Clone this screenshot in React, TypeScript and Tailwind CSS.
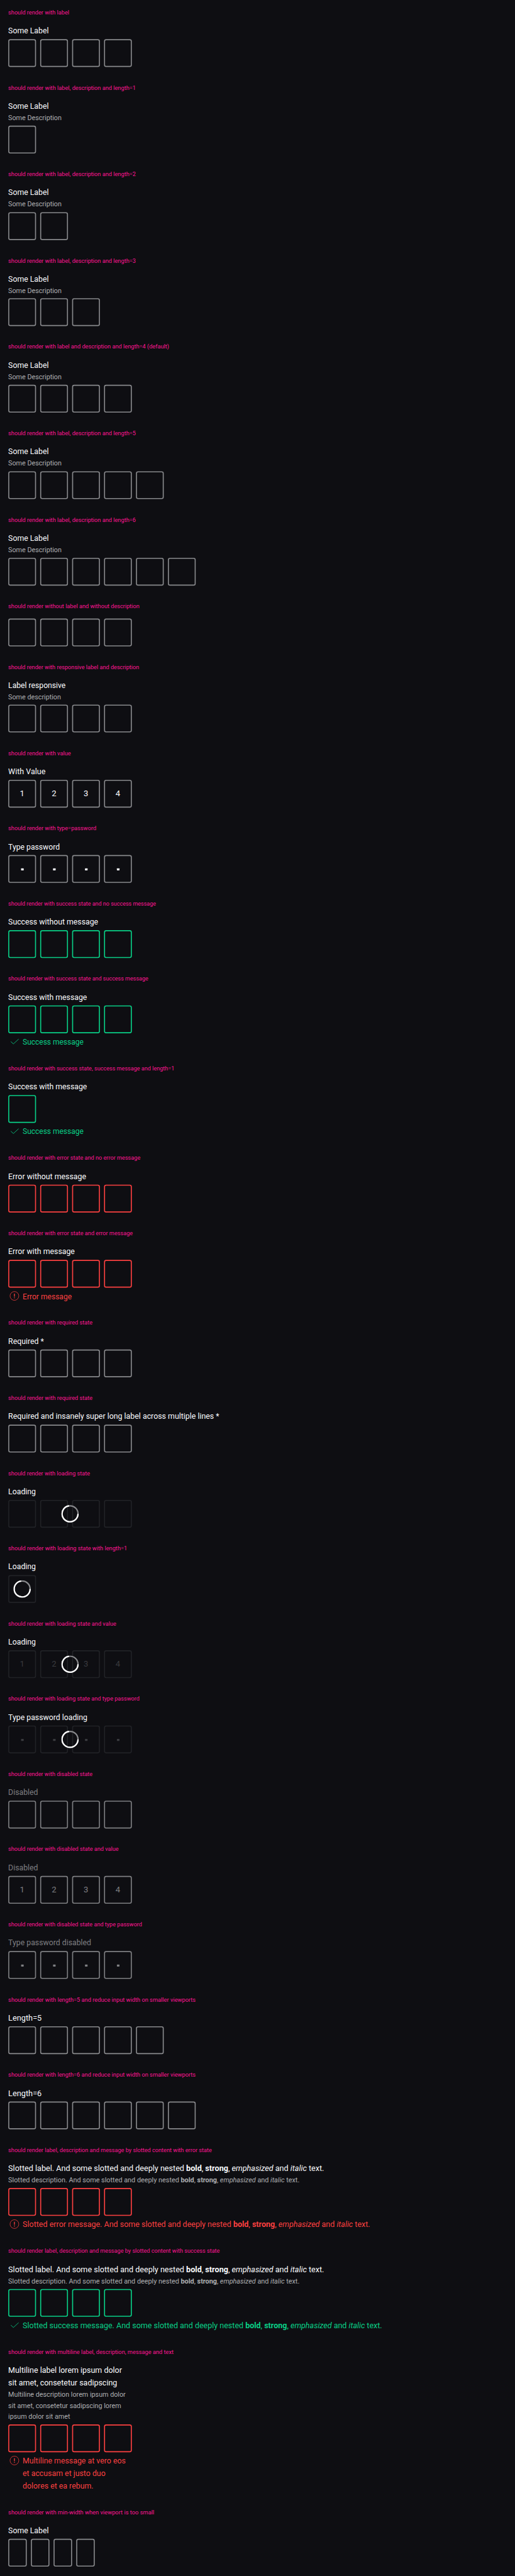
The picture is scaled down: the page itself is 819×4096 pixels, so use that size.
import type { ReactNode } from "react";

type Tone = "none" | "success" | "error" | "loading" | "disabled";

interface Case {
  title: string;
  titleClass?: string;
  label?: ReactNode;
  labelClass?: string;
  description?: ReactNode;
  descriptionClass?: string;
  message?: ReactNode;
  messageClass?: string;
  length?: number;
  value?: string;
  password?: boolean;
  narrow?: boolean;
  tone?: Tone;
}

const borders: Record<Tone, string> = {
  none: "border-[#88898c]",
  success: "border-[#09d087]",
  error: "border-[#fc4040]",
  loading: "border-[#212226]",
  disabled: "border-[#7e7f82]",
};

const digits: Record<Tone, string> = {
  none: "text-[#fbfcff]",
  success: "text-[#fbfcff]",
  error: "text-[#fbfcff]",
  loading: "text-[#3a3b3f]",
  disabled: "text-[#7e7f82]",
};

function Slotted({ intro }: { intro: string }) {
  return (
    <>
      {intro} And some slotted and deeply nested <b className="font-bold">bold</b>,{" "}
      <strong className="font-bold">strong</strong>, <em className="italic">emphasized</em> and{" "}
      <i className="italic">italic</i> text.
    </>
  );
}

function CheckIcon() {
  return (
    <svg viewBox="0 0 24 24" className="size-6 shrink-0" fill="none" stroke="currentColor" strokeWidth="1">
      <path d="M5 12.2 10 16.7 20.2 7.4" />
    </svg>
  );
}

function ExclamationIcon() {
  return (
    <svg viewBox="0 0 24 24" className="size-6 shrink-0" fill="none" stroke="currentColor">
      <circle cx="12" cy="12" r="8.5" strokeWidth="0.9" />
      <path d="M12 7.5v5.8M12 14.8v1.7" strokeWidth="1.6" />
    </svg>
  );
}

function Spinner() {
  return (
    <svg viewBox="0 0 34 34" className="size-[34px]" fill="none" strokeWidth="2.7">
      <circle cx="17" cy="17" r="15.5" stroke="#88898c" />
      <path d="M32.5 17A15.5 15.5 0 1 1 15.1 1.62" stroke="#ffffff" />
    </svg>
  );
}

function PinCode({ test }: { test: Case }) {
  const tone = test.tone ?? "none";
  const count = test.length ?? 4;
  return (
    <section className="pb-[30px]">
      <h2
        className={`mb-3.5 w-max origin-left whitespace-nowrap text-xs/5 text-[#ff1493] ${
          test.titleClass ?? "scale-x-[0.937]"
        }`}
      >
        {test.title}
      </h2>
      {test.label && (
        <div className="pb-1">
          <p
            className={`w-max origin-left whitespace-nowrap text-base/6 ${test.labelClass ?? "scale-x-[0.937]"} ${
              tone === "disabled" ? "text-[#7e7f82]" : "text-[#fbfcff]"
            }`}
          >
            {test.label}
          </p>
          {test.description && (
            <p
              className={`w-max origin-left whitespace-nowrap text-sm/[21.75px] text-[#afb0b3] ${
                test.descriptionClass ?? "scale-x-[0.938]"
              }`}
            >
              {test.description}
            </p>
          )}
        </div>
      )}
      <div className="relative flex w-max gap-2">
        {Array.from({ length: count }, (_, i) => (
          <div
            key={i}
            className={`flex h-[54px] items-center justify-center rounded border-2 text-base ${
              test.narrow ? "w-9" : "w-[54px]"
            } ${borders[tone]} ${digits[tone]}`}
          >
            {test.value && <span>{test.value[i]}</span>}
            {test.password && <span className="mt-0.5 ml-px h-1 w-[4.5px] rounded-[0.5px] bg-current" />}
          </div>
        ))}
        {tone === "loading" && (
          <div className="absolute inset-0 flex items-center justify-center">
            <Spinner />
          </div>
        )}
      </div>
      {test.message && (
        <div className={`flex gap-1 pt-1 text-base/6 ${tone === "error" ? "text-[#fc4040]" : "text-[#09d087]"}`}>
          {tone === "error" ? <ExclamationIcon /> : <CheckIcon />}
          <p className={`w-max origin-left translate-y-px whitespace-nowrap ${test.messageClass ?? "scale-x-[0.937]"}`}>
            {test.message}
          </p>
        </div>
      )}
    </section>
  );
}

const cases: Case[] = [
  { title: "should render with label", titleClass: "scale-x-[0.932]", label: "Some Label" },
  { title: "should render with label, description and length=1", label: "Some Label", description: "Some Description", length: 1 },
  { title: "should render with label, description and length=2", label: "Some Label", description: "Some Description", length: 2 },
  { title: "should render with label, description and length=3", label: "Some Label", description: "Some Description", length: 3 },
  { title: "should render with label and description and length=4 (default)", label: "Some Label", description: "Some Description" },
  { title: "should render with label, description and length=5", label: "Some Label", description: "Some Description", length: 5 },
  { title: "should render with label, description and length=6", label: "Some Label", description: "Some Description", length: 6 },
  { title: "should render without label and without description", titleClass: "scale-x-[0.935]" },
  { title: "should render with responsive label and description", titleClass: "scale-x-[0.93]", label: "Label responsive", labelClass: "scale-x-[0.929]", description: "Some description" },
  { title: "should render with value", label: "With Value", labelClass: "scale-x-[0.953]", value: "1234" },
  { title: "should render with type=password", titleClass: "scale-x-[0.934]", label: "Type password", labelClass: "scale-x-[0.93]", password: true },
  { title: "should render with success state and no success message", titleClass: "scale-x-[0.914]", label: "Success without message", tone: "success" },
  { title: "should render with success state and success message", titleClass: "scale-x-[0.914]", label: "Success with message", message: "Success message", messageClass: "scale-x-[0.914]", tone: "success" },
  { title: "should render with success state, success message and length=1", titleClass: "scale-x-[0.924]", label: "Success with message", message: "Success message", messageClass: "scale-x-[0.914]", length: 1, tone: "success" },
  { title: "should render with error state and no error message", titleClass: "scale-x-[0.929]", label: "Error without message", labelClass: "scale-x-[0.942]", tone: "error" },
  { title: "should render with error state and error message", titleClass: "scale-x-[0.931]", label: "Error with message", labelClass: "scale-x-[0.94]", message: "Error message", messageClass: "scale-x-[0.921]", tone: "error" },
  { title: "should render with required state", titleClass: "scale-x-[0.934]", label: "Required *" },
  { title: "should render with required state", titleClass: "scale-x-[0.934]", label: "Required and insanely super long label across multiple lines *", labelClass: "scale-x-[0.944]" },
  { title: "should render with loading state", titleClass: "scale-x-[0.929]", label: "Loading", tone: "loading" },
  { title: "should render with loading state with length=1", titleClass: "scale-x-[0.94]", label: "Loading", length: 1, tone: "loading" },
  { title: "should render with loading state and value", titleClass: "scale-x-[0.933]", label: "Loading", value: "1234", tone: "loading" },
  { title: "should render with loading state and type password", titleClass: "scale-x-[0.929]", label: "Type password loading", password: true, tone: "loading" },
  { title: "should render with disabled state", titleClass: "scale-x-[0.927]", label: "Disabled", tone: "disabled" },
  { title: "should render with disabled state and value", titleClass: "scale-x-[0.929]", label: "Disabled", value: "1234", tone: "disabled" },
  { title: "should render with disabled state and type password", titleClass: "scale-x-[0.927]", label: "Type password disabled", password: true, tone: "disabled" },
  { title: "should render with length=5 and reduce input width on smaller viewports", titleClass: "scale-x-[0.942]", label: "Length=5", labelClass: "scale-x-[0.973]", length: 5 },
  { title: "should render with length=6 and reduce input width on smaller viewports", titleClass: "scale-x-[0.942]", label: "Length=6", labelClass: "scale-x-[0.973]", length: 6 },
  {
    title: "should render label, description and message by slotted content with error state",
    titleClass: "scale-x-[0.933]",
    label: <Slotted intro="Slotted label." />,
    labelClass: "scale-x-[0.962]",
    description: <Slotted intro="Slotted description." />,
    descriptionClass: "scale-x-[0.946]",
    message: <Slotted intro="Slotted error message." />,
    messageClass: "scale-x-[0.955]",
    tone: "error",
  },
  {
    title: "should render label, description and message by slotted content with success state",
    titleClass: "scale-x-[0.928]",
    label: <Slotted intro="Slotted label." />,
    labelClass: "scale-x-[0.962]",
    description: <Slotted intro="Slotted description." />,
    descriptionClass: "scale-x-[0.946]",
    message: <Slotted intro="Slotted success message." />,
    messageClass: "scale-x-[0.954]",
    tone: "success",
  },
  {
    title: "should render with multiline label, description, message and text",
    titleClass: "scale-x-[0.942]",
    label: (
      <>
        Multiline label lorem ipsum dolor
        <br />
        sit amet, consetetur sadipscing
      </>
    ),
    labelClass: "scale-x-[0.951]",
    description: (
      <>
        Multiline description lorem ipsum dolor
        <br />
        sit amet, consetetur sadipscing lorem
        <br />
        ipsum dolor sit amet
      </>
    ),
    message: (
      <>
        Multiline message at vero eos
        <br />
        et accusam et justo duo
        <br />
        dolores et ea rebum.
      </>
    ),
    messageClass: "scale-x-[0.942]",
    tone: "error",
  },
  {
    title: "should render with min-width when viewport is too small",
    titleClass: "scale-x-[0.947]",
    label: "Some Label",
    narrow: true,
  },
];

export default function App() {
  return (
    <div className="h-[4096px] w-[819px] overflow-hidden bg-[#0e0e12]">
      <main className="h-[5001px] w-[1000px] origin-top-left scale-[0.819] bg-[#0e0e12] px-4 pt-3.5 font-[Roboto,sans-serif]">
        {cases.map((test, i) => (
          <PinCode key={i} test={test} />
        ))}
      </main>
    </div>
  );
}
